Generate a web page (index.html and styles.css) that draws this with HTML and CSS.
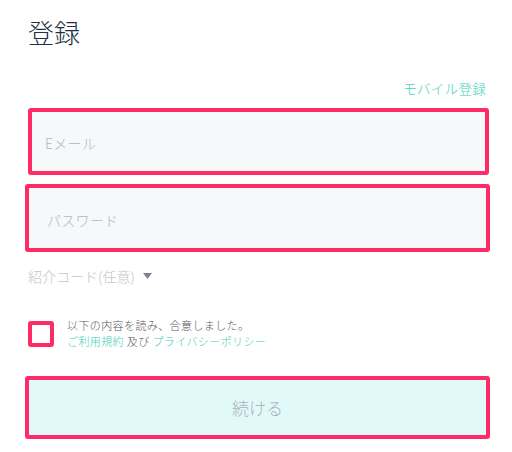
FILE: index.html
```html
<!DOCTYPE html>
<html lang="ja">
<head>
<meta charset="utf-8">
<link rel="stylesheet" href="styles.css">
</head>
<body>
<div class="page">
  <h1 class="title">登録</h1>
  <div class="mobile-row"><a class="link" href="#">モバイル登録</a></div>
  <div class="field field-email"><span class="placeholder">Eメール</span></div>
  <div class="field field-password"><span class="placeholder">パスワード</span></div>
  <div class="referral">紹介コード(任意)<svg class="caret" width="9" height="6" viewBox="0 0 9 6"><path d="M0 0H9L4.5 6Z" fill="#7a8491"/></svg></div>
  <div class="agree">
    <span class="checkbox"></span>
    <div class="agree-text">
      <div>以下の内容を読み、合意しました。</div>
      <div><a class="link" href="#">ご利用規約</a> 及び <a class="link" href="#">プライバシーポリシー</a></div>
    </div>
  </div>
  <div class="button">続ける</div>
</div>
</body>
</html>
```
FILE: styles.css
```css
html, body {
  margin: 0;
  padding: 0;
  background: #ffffff;
}
body {
  font-family: "Noto Sans CJK JP", "Noto Sans", sans-serif;
  font-weight: 300;
}
.page {
  width: 465px;
  margin-left: 25px;
  display: flex;
  flex-direction: column;
}
.title {
  margin: 17px 0 0 3px;
  font-size: 26px;
  line-height: 30px;
  font-weight: 300;
  color: #233042;
}
.mobile-row {
  display: flex;
  justify-content: flex-end;
  margin-top: 33px;
  padding-right: 4px;
  line-height: 16px;
}
.link {
  color: #3fd0b8;
  text-decoration: none;
}
.mobile-row .link {
  font-size: 13.5px;
  letter-spacing: 0.3px;
}
.field {
  box-sizing: border-box;
  border: 4px solid #ff2b67;
  border-radius: 3px;
  background: #f7f8fa;
  display: flex;
  align-items: center;
  padding-top: 3px;
}
.field-email {
  margin: 12px 1px 0 3px;
  height: 67px;
  padding-left: 13px;
}
.field-password {
  margin-top: 9px;
  height: 68px;
  padding-left: 18px;
}
.placeholder {
  font-size: 14px;
  color: #b3b6bc;
  letter-spacing: 0.3px;
}
.referral {
  margin: 14px 0 0 3px;
  line-height: 20px;
  font-size: 14px;
  color: #c3c5c9;
  display: flex;
  align-items: center;
}
.caret {
  margin-left: 8px;
}
.agree {
  margin: 31px 0 0 3px;
  display: flex;
  align-items: flex-start;
}
.checkbox {
  box-sizing: border-box;
  width: 26px;
  height: 26px;
  margin-top: 4px;
  border: 4px solid #ff2b67;
  border-radius: 3px;
  background: #fff;
  flex: none;
}
.agree-text {
  margin-left: 13px;
  font-size: 11px;
  line-height: 16px;
  letter-spacing: 0.4px;
  color: #555a60;
}
.button {
  box-sizing: border-box;
  margin-top: 27px;
  height: 63px;
  border: 4px solid #ff2b67;
  border-radius: 3px;
  background: #e2f9fa;
  display: flex;
  align-items: center;
  justify-content: center;
  font-size: 17px;
  color: #a9b2b5;
}
```
